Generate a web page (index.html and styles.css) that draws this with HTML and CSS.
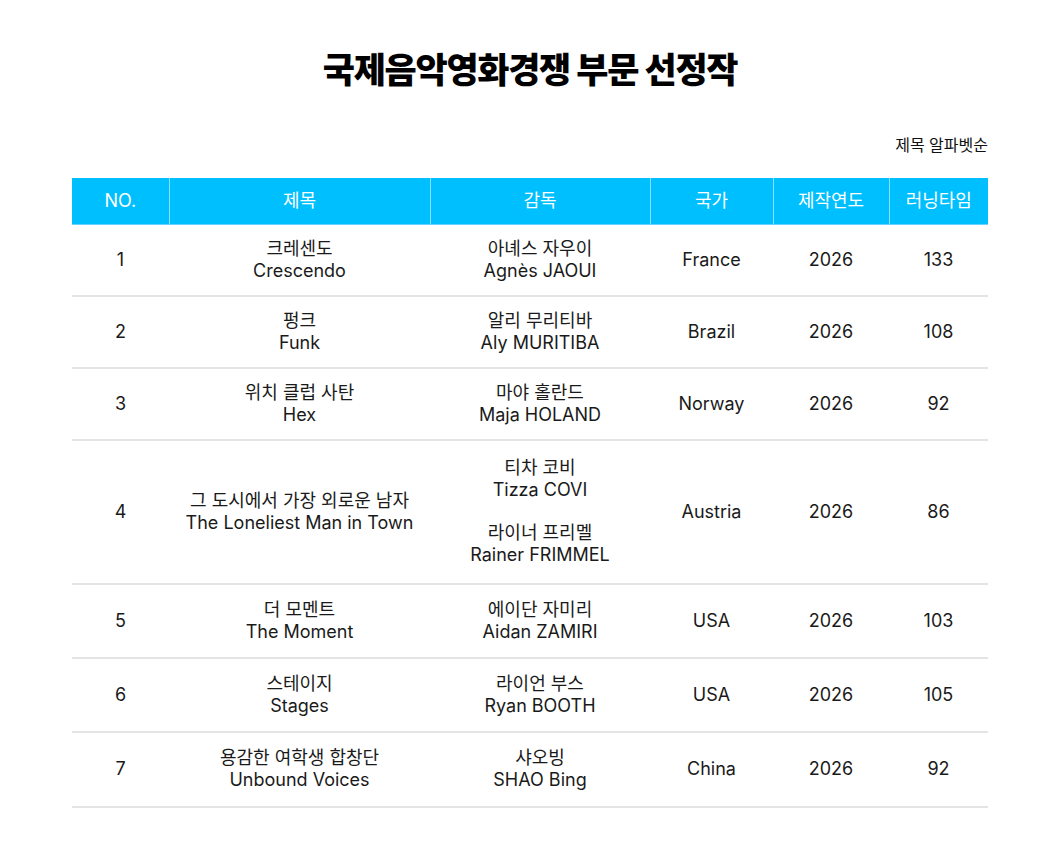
FILE: index.html
```html
<!DOCTYPE html>
<html lang="ko">
<head>
<meta charset="utf-8">
<title>국제음악영화경쟁 부문 선정작</title>
<link rel="stylesheet" href="styles.css">
</head>
<body>
<main class="page">
  <h1 class="title">국제음악영화경쟁 부문 선정작</h1>
  <p class="sort-note">제목 알파벳순</p>
  <table class="films">
    <colgroup>
      <col class="c-no"><col class="c-title"><col class="c-dir"><col class="c-country"><col class="c-year"><col class="c-run">
    </colgroup>
    <thead>
      <tr><th>NO.</th><th>제목</th><th>감독</th><th>국가</th><th>제작연도</th><th>러닝타임</th></tr>
    </thead>
    <tbody>
      <tr>
        <td>1</td>
        <td><div class="ko">크레센도</div><div>Crescendo</div></td>
        <td><div class="ko">아녜스 자우이</div><div>Agnès JAOUI</div></td>
        <td>France</td><td>2026</td><td>133</td>
      </tr>
      <tr>
        <td>2</td>
        <td><div class="ko">펑크</div><div>Funk</div></td>
        <td><div class="ko">알리 무리티바</div><div>Aly MURITIBA</div></td>
        <td>Brazil</td><td>2026</td><td>108</td>
      </tr>
      <tr>
        <td>3</td>
        <td><div class="ko">위치 클럽 사탄</div><div>Hex</div></td>
        <td><div class="ko">마야 홀란드</div><div>Maja HOLAND</div></td>
        <td>Norway</td><td>2026</td><td>92</td>
      </tr>
      <tr>
        <td>4</td>
        <td><div class="ko">그 도시에서 가장 외로운 남자</div><div>The Loneliest Man in Town</div></td>
        <td class="multi">
          <div class="person"><div class="ko">티차 코비</div><div>Tizza COVI</div></div>
          <div class="person"><div class="ko">라이너 프리멜</div><div>Rainer FRIMMEL</div></div>
        </td>
        <td>Austria</td><td>2026</td><td>86</td>
      </tr>
      <tr class="roomy">
        <td>5</td>
        <td><div class="ko">더 모멘트</div><div>The Moment</div></td>
        <td><div class="ko">에이단 자미리</div><div>Aidan ZAMIRI</div></td>
        <td>USA</td><td>2026</td><td>103</td>
      </tr>
      <tr class="roomy">
        <td>6</td>
        <td><div class="ko">스테이지</div><div>Stages</div></td>
        <td><div class="ko">라이언 부스</div><div>Ryan BOOTH</div></td>
        <td>USA</td><td>2026</td><td>105</td>
      </tr>
      <tr class="roomy">
        <td>7</td>
        <td><div class="ko">용감한 여학생 합창단</div><div>Unbound Voices</div></td>
        <td><div class="ko">샤오빙</div><div>SHAO Bing</div></td>
        <td>China</td><td>2026</td><td>92</td>
      </tr>
    </tbody>
  </table>
</main>
</body>
</html>
```
FILE: styles.css
```css
* { box-sizing: border-box; }
html, body { margin: 0; padding: 0; background: #ffffff; }
body {
  font-family: "Inter", "Noto Sans CJK KR", sans-serif;
  color: #111111;
}
.page {
  width: 916px;
  margin: 0 auto;
  padding-top: 48px;
}
.title {
  margin: 0;
  text-align: center;
  font-size: 35px;
  line-height: 44px;
  font-weight: 800;
  letter-spacing: -1.3px;
  color: #000000;
}
.sort-note {
  margin: 43px 0 0;
  text-align: right;
  font-size: 16px;
  line-height: 20px;
  letter-spacing: 0;
  color: #111111;
}
.films {
  width: 916px;
  margin-top: 23px;
  border-collapse: collapse;
  table-layout: fixed;
  font-size: 18px;
  line-height: 22px;
}
.c-no { width: 97px; }
.c-title { width: 261px; }
.c-dir { width: 220px; }
.c-country { width: 123px; }
.c-year { width: 116px; }
.c-run { width: 99px; }
.films th {
  background: #00bfff;
  color: #ffffff;
  font-weight: 400;
  height: 46px;
  padding: 0;
  text-align: center;
  border-left: 1px solid #8adfff;
  border-bottom: 1px solid #66d4ff;
}
.films th:first-child { border-left: none; }
.films td {
  text-align: center;
  vertical-align: middle;
  padding: 13px 4px;
  border-bottom: 2px solid #e4e4e4;
  color: #1a1a1a;
}
.films td.multi { padding: 16.5px 4px; }
.films .roomy td { padding: 14.2px 4px; }
.person + .person { margin-top: 21px; }
```
